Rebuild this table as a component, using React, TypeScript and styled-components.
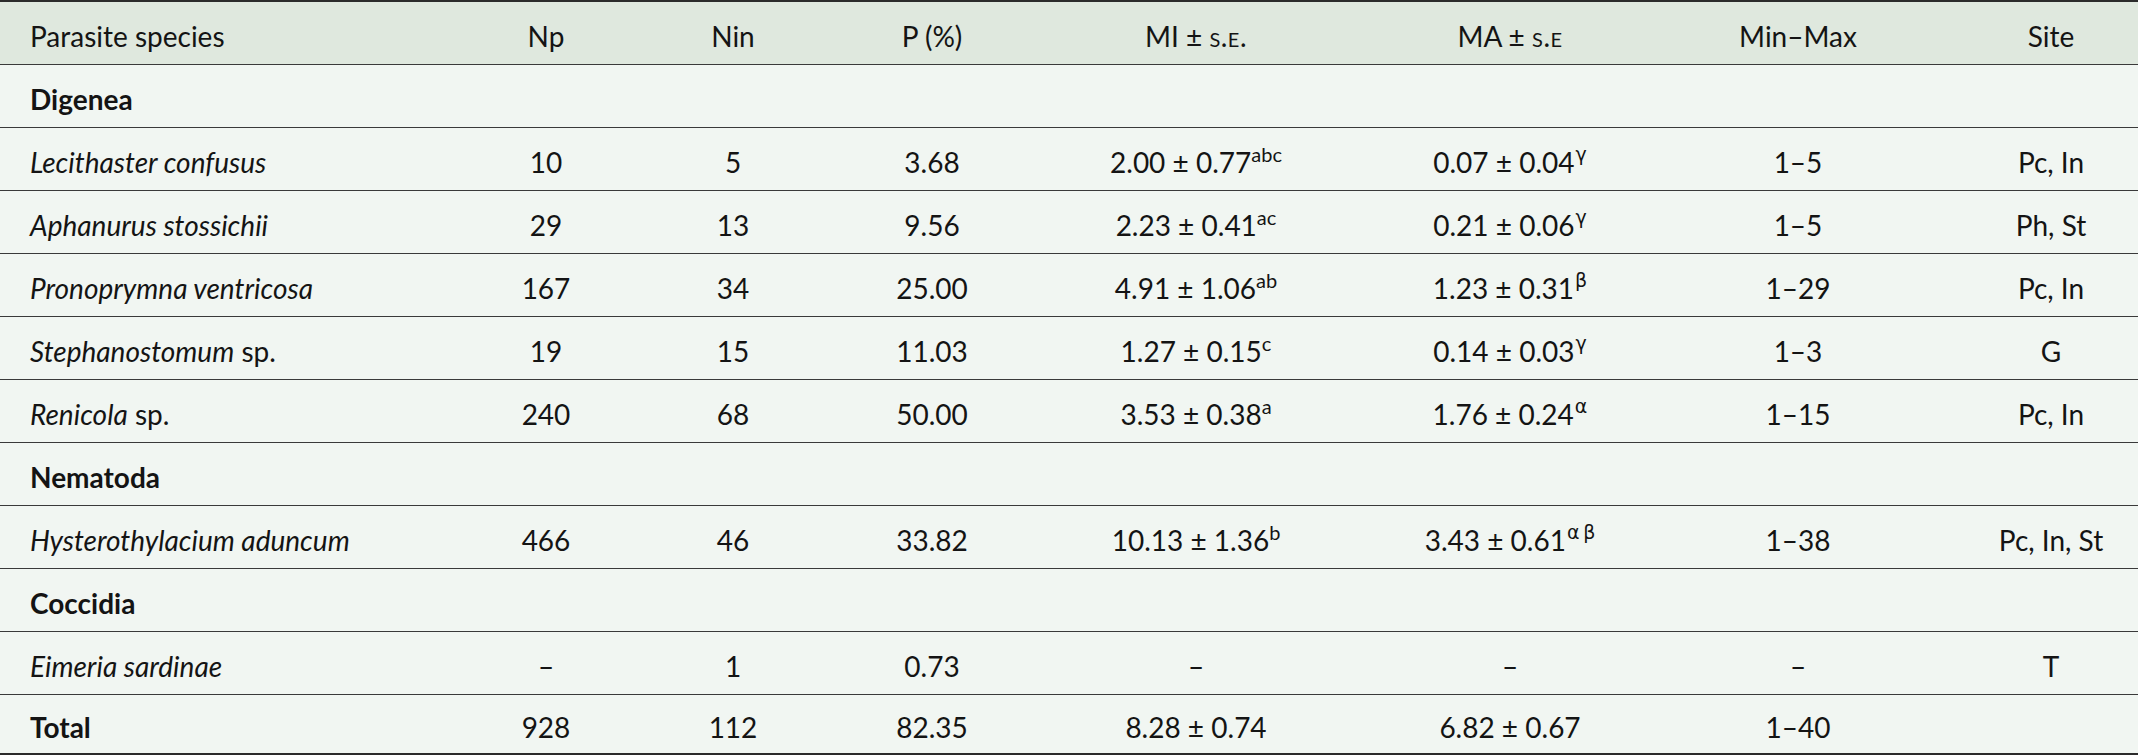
import React from 'react';
import styled, { createGlobalStyle } from 'styled-components';

const GlobalStyle = createGlobalStyle`
  html, body { margin: 0; padding: 0; background: #f1f6f2; }
  body { font-family: Lato, "Liberation Sans", sans-serif; color: #141414; }
`;

const COLS = '486px 120px 254px 144px 384px 244px 332px 174px';

const Table = styled.div`
  width: 2138px;
  background: #f1f6f2;
  font-family: Lato, "Liberation Sans", sans-serif;
  font-size: 28px;
  color: #141414;
  border-top: 2px solid #2b2b2b;
`;

const Row = styled.div<{ $head?: boolean; $last?: boolean }>`
  display: grid;
  grid-template-columns: ${COLS};
  align-items: center;
  box-sizing: border-box;
  height: ${(p) => (p.$last ? '60px' : '63px')};
  background: ${(p) => (p.$head ? '#dfe8de' : '#f1f6f2')};
  border-bottom: ${(p) => (p.$last ? '2px solid #2b2b2b' : '1px solid #3a3a3a')};
`;

const Cell = styled.div<{ $first?: boolean }>`
  padding-top: 5px;
  padding-left: ${(p) => (p.$first ? '30px' : '0')};
  text-align: ${(p) => (p.$first ? 'left' : 'center')};
  white-space: nowrap;
`;

const Species = styled.span`
  font-style: italic;
`;

const Group = styled.span`
  font-weight: 700;
`;

const SmallCaps = styled.span`
  font-variant: small-caps;
  letter-spacing: 0.5px;
`;

const Sup = styled.sup`
  font-size: 20px;
  line-height: 0;
  vertical-align: 11px;
`;

const GreekSup = styled.sup`
  font-family: "DejaVu Sans", sans-serif;
  font-size: 19px;
  font-weight: 400;
  color: #141414;
  line-height: 0;
  vertical-align: 12px;
  margin-left: 1px;
`;

type Data = {
  name: React.ReactNode;
  np: string;
  nin: string;
  p: string;
  mi: string;
  miSup?: string;
  ma: string;
  maSup?: string;
  range: string;
  site: string;
};

const digenea: Data[] = [
  { name: <Species>Lecithaster confusus</Species>, np: '10', nin: '5', p: '3.68', mi: '2.00 ± 0.77', miSup: 'abc', ma: '0.07 ± 0.04', maSup: 'γ', range: '1–5', site: 'Pc, In' },
  { name: <Species>Aphanurus stossichii</Species>, np: '29', nin: '13', p: '9.56', mi: '2.23 ± 0.41', miSup: 'ac', ma: '0.21 ± 0.06', maSup: 'γ', range: '1–5', site: 'Ph, St' },
  { name: <Species>Pronoprymna ventricosa</Species>, np: '167', nin: '34', p: '25.00', mi: '4.91 ± 1.06', miSup: 'ab', ma: '1.23 ± 0.31', maSup: 'β', range: '1–29', site: 'Pc, In' },
  { name: <><Species>Stephanostomum</Species> sp.</>, np: '19', nin: '15', p: '11.03', mi: '1.27 ± 0.15', miSup: 'c', ma: '0.14 ± 0.03', maSup: 'γ', range: '1–3', site: 'G' },
  { name: <><Species>Renicola</Species> sp.</>, np: '240', nin: '68', p: '50.00', mi: '3.53 ± 0.38', miSup: 'a', ma: '1.76 ± 0.24', maSup: 'α', range: '1–15', site: 'Pc, In' },
];

const nematoda: Data[] = [
  { name: <Species>Hysterothylacium aduncum</Species>, np: '466', nin: '46', p: '33.82', mi: '10.13 ± 1.36', miSup: 'b', ma: '3.43 ± 0.61', maSup: 'α\u2009β', range: '1–38', site: 'Pc, In, St' },
];

const coccidia: Data[] = [
  { name: <Species>Eimeria sardinae</Species>, np: '–', nin: '1', p: '0.73', mi: '–', ma: '–', range: '–', site: 'T' },
];

const DataRow: React.FC<{ d: Data; last?: boolean }> = ({ d, last }) => (
  <Row $last={last}>
    <Cell $first>{d.name}</Cell>
    <Cell>{d.np}</Cell>
    <Cell>{d.nin}</Cell>
    <Cell>{d.p}</Cell>
    <Cell>
      {d.mi}
      {d.miSup && <Sup>{d.miSup}</Sup>}
    </Cell>
    <Cell>
      {d.ma}
      {d.maSup && <GreekSup>{d.maSup}</GreekSup>}
    </Cell>
    <Cell>{d.range}</Cell>
    <Cell>{d.site}</Cell>
  </Row>
);

const GroupRow: React.FC<{ label: string }> = ({ label }) => (
  <Row>
    <Cell $first>
      <Group>{label}</Group>
    </Cell>
  </Row>
);

export default function App() {
  return (
    <>
      <GlobalStyle />
      <Table>
        <Row $head>
          <Cell $first>Parasite species</Cell>
          <Cell>Np</Cell>
          <Cell>Nin</Cell>
          <Cell>P (%)</Cell>
          <Cell>
            MI ± <SmallCaps>s.e.</SmallCaps>
          </Cell>
          <Cell>
            MA ± <SmallCaps>s.e</SmallCaps>
          </Cell>
          <Cell>Min–Max</Cell>
          <Cell>Site</Cell>
        </Row>
        <GroupRow label="Digenea" />
        {digenea.map((d, i) => (
          <DataRow key={i} d={d} />
        ))}
        <GroupRow label="Nematoda" />
        {nematoda.map((d, i) => (
          <DataRow key={i} d={d} />
        ))}
        <GroupRow label="Coccidia" />
        {coccidia.map((d, i) => (
          <DataRow key={i} d={d} />
        ))}
        <Row $last>
          <Cell $first>
            <Group>Total</Group>
          </Cell>
          <Cell>928</Cell>
          <Cell>112</Cell>
          <Cell>82.35</Cell>
          <Cell>8.28 ± 0.74</Cell>
          <Cell>6.82 ± 0.67</Cell>
          <Cell>1–40</Cell>
          <Cell></Cell>
        </Row>
      </Table>
    </>
  );
}
